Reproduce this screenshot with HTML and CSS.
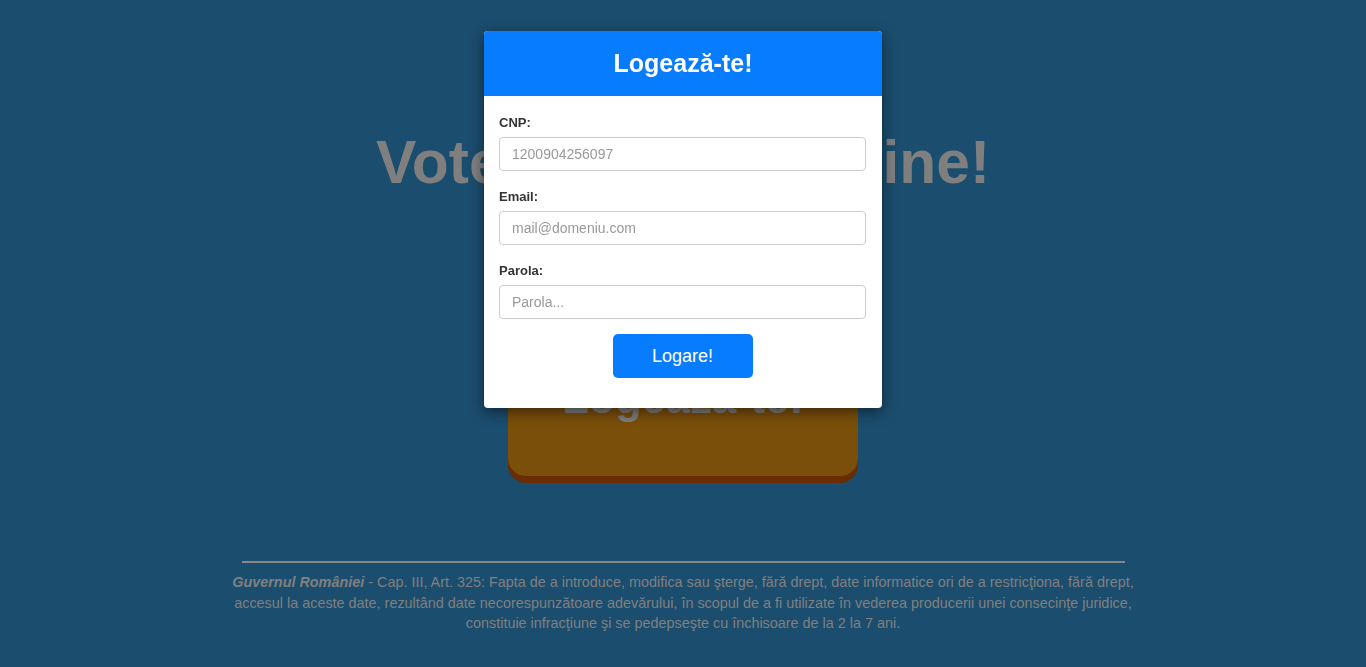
FILE: index.html
```html
<!DOCTYPE html>
<html lang="ro">
<head>
<meta charset="utf-8">
<title>Logează-te!</title>
<link rel="stylesheet" href="styles.css">
</head>
<body>
<main class="page">
  <h1 class="hero-title">Votează acum online!</h1>
  <div class="cta-wrap">
    <div class="cta">Logează-te!</div>
  </div>
  <footer class="footer">
    <hr class="footer-rule">
    <p class="footer-text"><strong><em>Guvernul României</em></strong> - Cap. III, Art. 325: Fapta de a introduce, modifica sau şterge, fără drept, date informatice ori de a restricţiona, fără drept, accesul la aceste date, rezultând date necorespunzătoare adevărului, în scopul de a fi utilizate în vederea producerii unei consecinţe juridice, constituie infracţiune şi se pedepseşte cu închisoare de la 2 la 7 ani.</p>
  </footer>
</main>

<div class="modal">
  <div class="modal-header">Logează-te!</div>
  <form class="modal-body">
    <div class="field">
      <label class="field-label">CNP:</label>
      <input class="field-input" type="text" placeholder="1200904256097">
    </div>
    <div class="field">
      <label class="field-label">Email:</label>
      <input class="field-input" type="text" placeholder="mail@domeniu.com">
    </div>
    <div class="field field-last">
      <label class="field-label">Parola:</label>
      <input class="field-input" type="password" placeholder="Parola...">
    </div>
    <div class="actions">
      <button class="submit" type="button">Logare!</button>
    </div>
  </form>
</div>
</body>
</html>
```

FILE: styles.css
```css
* { box-sizing: border-box; }

html, body {
  margin: 0;
  padding: 0;
}

body {
  background: #1b4d6e;
  font-family: "Liberation Sans", Arial, sans-serif;
  height: 667px;
  overflow: hidden;
}

.page {
  display: flex;
  flex-direction: column;
  align-items: center;
}

.hero-title {
  margin: 128px 0 0;
  font-size: 60.5px;
  line-height: 69px;
  font-weight: bold;
  color: #7f7f7f;
  white-space: nowrap;
}

.cta-wrap {
  margin-top: 131px;
}

.cta {
  width: 350px;
  height: 148px;
  padding-bottom: 8px;
  border-radius: 18px;
  background: #7a4f0a;
  box-shadow: 0 7px 0 #6a2d02;
  color: #7d7d7d;
  font-weight: bold;
  font-size: 43.5px;
  display: flex;
  align-items: center;
  justify-content: center;
}

.footer {
  margin-top: 85px;
  width: 930px;
  display: flex;
  flex-direction: column;
  align-items: center;
}

.footer-rule {
  width: 883px;
  height: 2px;
  border: 0;
  margin: 0;
  background: #878787;
}

.footer-text {
  margin: 9px 0 0;
  text-align: center;
  font-size: 14.4px;
  line-height: 20.5px;
  color: #808080;
}

.modal {
  position: fixed;
  top: 31px;
  left: 50%;
  transform: translateX(-50%);
  width: 398px;
  background: #fff;
  border-radius: 4px;
  overflow: hidden;
  box-shadow: 0 4px 14px rgba(0, 0, 0, 0.5);
}

.modal-header {
  height: 65px;
  background: #087cff;
  color: #fff;
  font-weight: bold;
  font-size: 25px;
  display: flex;
  align-items: center;
  justify-content: center;
}

.modal-body {
  margin: 0;
  padding: 18px 16px 30px 15px;
  display: flex;
  flex-direction: column;
}

.field {
  display: flex;
  flex-direction: column;
  margin-bottom: 17px;
}

.field-last {
  margin-bottom: 15px;
}

.field-label {
  font-size: 13px;
  line-height: 18px;
  font-weight: bold;
  color: #333;
  margin-bottom: 5px;
}

.field-input {
  height: 34px;
  width: 100%;
  border: 1px solid #ccc;
  border-radius: 4px;
  padding: 0 12px;
  font-family: "Liberation Sans", Arial, sans-serif;
  font-size: 14px;
  color: #555;
  background: #fff;
  outline: none;
}

.field-input::placeholder {
  color: #999;
}

.actions {
  display: flex;
  justify-content: center;
}

.submit {
  width: 140px;
  height: 44px;
  border: 0;
  border-radius: 5px;
  background: #087cff;
  color: #fff;
  font-family: "Liberation Sans", Arial, sans-serif;
  font-size: 18px;
  cursor: pointer;
}
```
